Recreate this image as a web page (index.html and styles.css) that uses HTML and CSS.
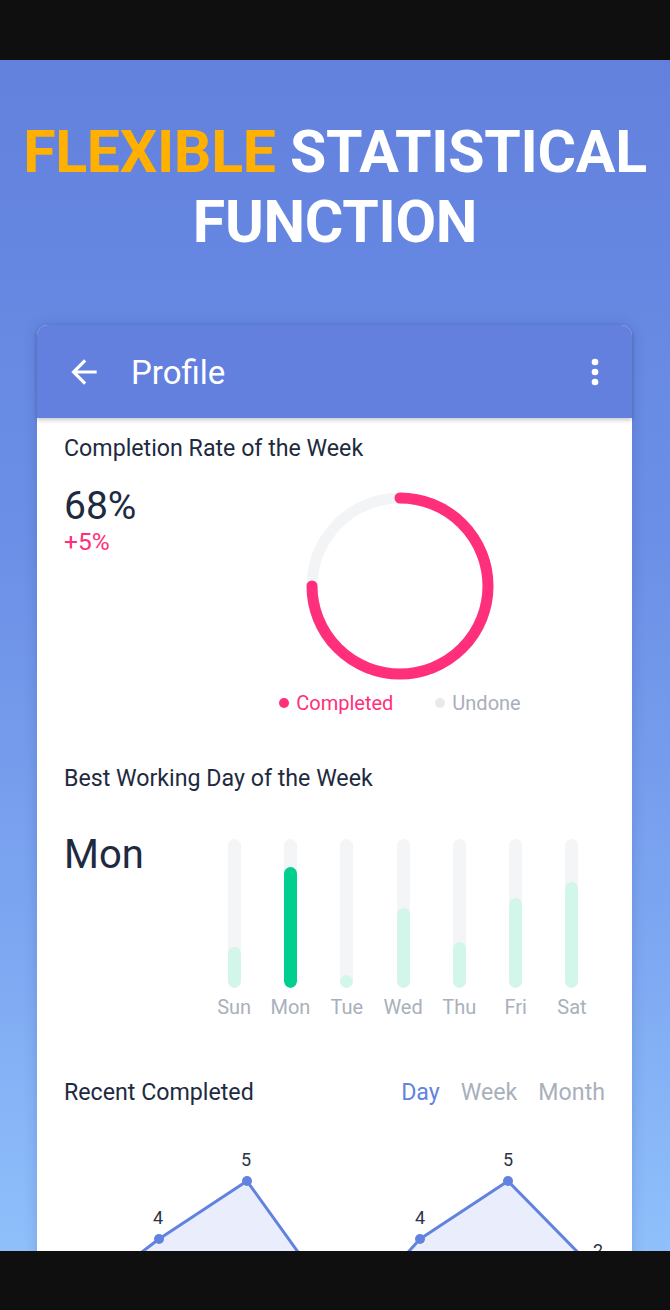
FILE: index.html
```html
<!DOCTYPE html>
<html lang="en">
<head>
<meta charset="utf-8">
<title>Flexible Statistical Function</title>
<link rel="stylesheet" href="styles.css">
</head>
<body>
<div class="top-bar"></div>
<div class="screen">
  <h1 class="headline"><span class="accent">FLEXIBLE</span> STATISTICAL<br>FUNCTION</h1>
  <div class="card">
    <div class="appbar">
      <svg class="icon-back" viewBox="0 0 24 24" width="38" height="38"><path fill="#fff" d="M20 11H7.830l5.59-5.59L12 4l-8 8 8 8 1.41-1.41L7.83 13H20v-2z"/></svg>
      <span class="appbar-title">Profile</span>
      <svg class="icon-more" viewBox="0 0 24 24" width="40" height="40"><circle cx="12" cy="6" r="2" fill="#fff"/><circle cx="12" cy="12" r="2" fill="#fff"/><circle cx="12" cy="18" r="2" fill="#fff"/></svg>
    </div>
    <div class="card-body">
      <section class="sec-rate">
        <h2 class="sec-title">Completion Rate of the Week</h2>
        <div class="rate-row">
          <div class="rate-left">
            <div class="rate-value">68%</div>
            <div class="rate-delta">+5%</div>
          </div>
          <div class="rate-right">
            <svg class="donut" viewBox="0 0 200 200" width="200" height="200">
              <circle cx="100" cy="100" r="88" fill="none" stroke="#f3f4f6" stroke-width="11"/>
              <path d="M100 12 A88 88 0 1 1 12 100" fill="none" stroke="#ff2f7b" stroke-width="11" stroke-linecap="round"/>
            </svg>
            <div class="legend">
              <span class="legend-item done"><i class="dot"></i>Completed</span>
              <span class="legend-item undone"><i class="dot"></i>Undone</span>
            </div>
          </div>
        </div>
      </section>
      <section class="sec-best">
        <h2 class="sec-title">Best Working Day of the Week</h2>
        <div class="best-row">
          <div class="best-day">Mon</div>
          <div class="bars">
            <div class="bar-col"><div class="track"><div class="fill" style="height:41px"></div></div><span class="bar-label">Sun</span></div>
            <div class="bar-col"><div class="track"><div class="fill best" style="height:121px"></div></div><span class="bar-label">Mon</span></div>
            <div class="bar-col"><div class="track"><div class="fill" style="height:13px"></div></div><span class="bar-label">Tue</span></div>
            <div class="bar-col"><div class="track"><div class="fill" style="height:80px"></div></div><span class="bar-label">Wed</span></div>
            <div class="bar-col"><div class="track"><div class="fill" style="height:46px"></div></div><span class="bar-label">Thu</span></div>
            <div class="bar-col"><div class="track"><div class="fill" style="height:90px"></div></div><span class="bar-label">Fri</span></div>
            <div class="bar-col"><div class="track"><div class="fill" style="height:106px"></div></div><span class="bar-label">Sat</span></div>
          </div>
        </div>
      </section>
      <section class="sec-recent">
        <div class="recent-head">
          <h2 class="sec-title">Recent Completed</h2>
          <div class="tabs">
            <span class="tab active">Day</span>
            <span class="tab">Week</span>
            <span class="tab">Month</span>
          </div>
        </div>
        <svg class="line-chart" viewBox="0 0 541 180" width="541" height="180">
          <polygon points="20,185 95,128 183,70 262,180" fill="#eaedfb"/>
          <polyline points="20,185 95,128 183,70 262,180" fill="none" stroke="#6282e0" stroke-width="3" stroke-linejoin="round"/>
          <circle cx="95" cy="128" r="5" fill="#6282e0"/>
          <circle cx="183" cy="70" r="5" fill="#6282e0"/>
          <text x="94" y="113" class="pt-label">4</text>
          <text x="182" y="55" class="pt-label">5</text>
          <polygon points="300,190 356,128 444,70 540,168 541,190" fill="#eaedfb"/>
          <polyline points="300,190 356,128 444,70 540,168" fill="none" stroke="#6282e0" stroke-width="3" stroke-linejoin="round"/>
          <circle cx="356" cy="128" r="5" fill="#6282e0"/>
          <circle cx="444" cy="70" r="5" fill="#6282e0"/>
          <text x="356" y="113" class="pt-label">4</text>
          <text x="444" y="55" class="pt-label">5</text>
          <text x="534" y="146" class="pt-label">2</text>
        </svg>
      </section>
    </div>
  </div>
</div>
<div class="bottom-bar"></div>
</body>
</html>
```
FILE: styles.css
```css
* { box-sizing: border-box; }
html, body { margin: 0; padding: 0; }
body {
  width: 670px;
  height: 1310px;
  background: #0f0f0f;
  font-family: Roboto, "Noto Sans", "Liberation Sans", sans-serif;
  overflow: hidden;
}
.top-bar { height: 60px; background: #0f0f0f; }
.bottom-bar { height: 59px; background: #0f0f0f; }
.screen {
  height: 1191px;
  overflow: hidden;
  background: linear-gradient(180deg, #6281dd 0%, #6b8fe6 40%, #7ea8f2 75%, #8fc0fb 100%);
  padding-top: 57px;
}
.headline {
  margin: 0;
  text-align: center;
  color: #fff;
  font-family: Roboto, "Liberation Sans", sans-serif;
  font-weight: 700;
  font-size: 59px;
  line-height: 70px;
  letter-spacing: -0.3px;
}
.accent { color: #ffb000; }
.card {
  margin: 68px 38px 0 37px;
  height: 1000px;
  background: #fff;
  border-radius: 11px 11px 0 0;
  box-shadow: 0 0 14px rgba(20, 40, 110, 0.18);
}
.appbar {
  height: 93px;
  background: #6380df;
  border-radius: 11px 11px 0 0;
  display: flex;
  align-items: center;
  padding: 0 17px 0 28px;
  box-shadow: 0 2px 4px rgba(0, 0, 0, 0.22);
  position: relative;
}
.icon-back { flex: none; }
.appbar-title {
  margin-left: 28px;
  color: #fff;
  font-size: 33px;
  line-height: 40px;
  margin-top: 2px;
  flex: 1;
}
.icon-more { flex: none; }
.card-body { padding: 17px 27px 0 27px; color: #1e2a40; }
.sec-title {
  margin: 0;
  font-size: 23.2px;
  font-weight: 400;
  line-height: 26px;
  color: #1e2a40;
}
.rate-row { display: flex; margin-top: 23px; }
.rate-left { width: 136px; flex: none; }
.rate-value { font-size: 39px; line-height: 44px; }
.rate-delta { font-size: 24.5px; line-height: 28px; color: #ff2f7b; margin-top: 0; }
.rate-right { width: 400px; display: flex; flex-direction: column; align-items: center; }
.donut { display: block; margin-top: 2px; }
.legend { display: flex; gap: 42px; margin-top: 5px; font-size: 20px; line-height: 24px; }
.legend-item { display: flex; align-items: center; }
.dot { display: inline-block; width: 10px; height: 10px; border-radius: 50%; margin-right: 7px; }
.done { color: #ff2f7b; }
.done .dot { background: #ff2f7b; }
.undone { color: #a9afba; }
.undone .dot { background: #e8e9ec; }
.sec-best { margin-top: 50px; }
.best-row { display: flex; margin-top: 40px; }
.best-day { width: 142px; flex: none; font-size: 40px; line-height: 48px; }
.bars { display: flex; }
.bar-col { width: 56.3px; display: flex; flex-direction: column; align-items: center; padding-top: 8px; }
.track {
  width: 13px;
  height: 149px;
  border-radius: 7px;
  background: #f4f5f7;
  display: flex;
  flex-direction: column;
  justify-content: flex-end;
  overflow: hidden;
}
.fill { width: 13px; border-radius: 7px; background: #d3f6ea; }
.fill.best { background: #00cf8f; }
.bar-label { margin-top: 7px; font-size: 20px; line-height: 24px; color: #a9b0bb; }
.sec-recent { margin-top: 60px; }
.recent-head { display: flex; justify-content: space-between; align-items: baseline; }
.tabs { display: flex; gap: 21px; font-size: 23.2px; line-height: 26px; color: #a9b0bb; }
.tab.active { color: #6383e0; }
.line-chart { display: block; margin-top: 6px; overflow: visible; }
.pt-label { font-family: Roboto, "Liberation Sans", sans-serif; font-size: 18px; fill: #2b3445; text-anchor: middle; }
```
